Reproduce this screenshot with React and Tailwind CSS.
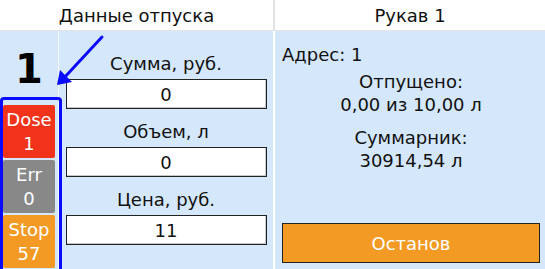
const FONT = { fontFamily: '"DejaVu Sans", sans-serif' }

function Field({ label, value }) {
  return (
    <div className="flex flex-col items-center">
      <div className="h-[30px] leading-[30px] text-[18px] text-[#111]">{label}</div>
      <div className="w-[201px] h-[30px] bg-white border border-[#222] shadow-[inset_-1px_-1px_0_#c8c8c8] flex items-center justify-center text-[18px] text-[#111]">
        {value}
      </div>
    </div>
  )
}

function StatusBox({ title, value, color }) {
  return (
    <div className={`w-[52px] h-[53px] rounded-[2px] ${color} flex flex-col items-center justify-center text-white text-[18px] leading-[24px]`}>
      <span>{title}</span>
      <span>{value}</span>
    </div>
  )
}

export default function App() {
  return (
    <div className="relative w-[545px] h-[269px] overflow-hidden bg-white flex flex-col" style={FONT}>
      {/* header */}
      <div className="h-[31px] flex border-b border-[#e4e4e4] text-[18px] text-[#111]">
        <div className="w-[273px] flex items-center justify-center">Данные отпуска</div>
        <div className="w-[2px] bg-[#e2e2e2]" />
        <div className="flex-1 flex items-center justify-center">Рукав 1</div>
      </div>

      <div className="flex-1 flex gap-[2px]">
        {/* left panel */}
        <div className="w-[273px] bg-[#d5e7fb] flex">
          <div className="w-[58px] flex flex-col items-center">
            <div className="h-[73px] pt-[18px] text-[40px] font-bold leading-[40px] text-black">1</div>
            <div className="flex flex-col gap-[2px] mt-[1px]">
              <StatusBox title="Dose" value="1" color="bg-[#f2331b]" />
              <StatusBox title="Err" value="0" color="bg-[#888888]" />
              <StatusBox title="Stop" value="57" color="bg-[#f39a24]" />
            </div>
          </div>
          <div className="w-px bg-[#f4f8fd]" />
          <div className="flex-1 flex flex-col items-center gap-[8px] pt-[18px]">
            <Field label="Сумма, руб." value="0" />
            <Field label="Объем, л" value="0" />
            <Field label="Цена, руб." value="11" />
          </div>
        </div>

        {/* right panel */}
        <div className="flex-1 bg-[#d5e7fb] flex flex-col pl-[7px] pr-[5px] text-[18px] text-[#111]">
          <div className="h-[24px] mt-[12px] leading-[24px]">Адрес: 1</div>
          <div className="flex flex-col items-center leading-[23px] mt-[3px]">
            <span>Отпущено:</span>
            <span>0,00 из 10,00 л</span>
            <span className="mt-[10px]">Суммарник:</span>
            <span>30914,54 л</span>
          </div>
          <div className="mt-auto mb-[6px] h-[40px] bg-[#f39a24] border border-[#222] flex items-center justify-center text-white text-[18px]">
            Останов
          </div>
        </div>
      </div>

      {/* annotation overlay */}
      <div className="absolute left-0 top-[97px] w-[62px] h-[180px] border-[3px] border-[#0a0aff] rounded-[4px]" />
      <svg className="absolute left-0 top-0" width="120" height="100" viewBox="0 0 120 100">
        <line x1="102" y1="37" x2="63" y2="79" stroke="#0a0aff" strokeWidth="3" strokeLinecap="round" />
        <polygon points="57,85 60,70 72,82" fill="#0a0aff" />
      </svg>
    </div>
  )
}
